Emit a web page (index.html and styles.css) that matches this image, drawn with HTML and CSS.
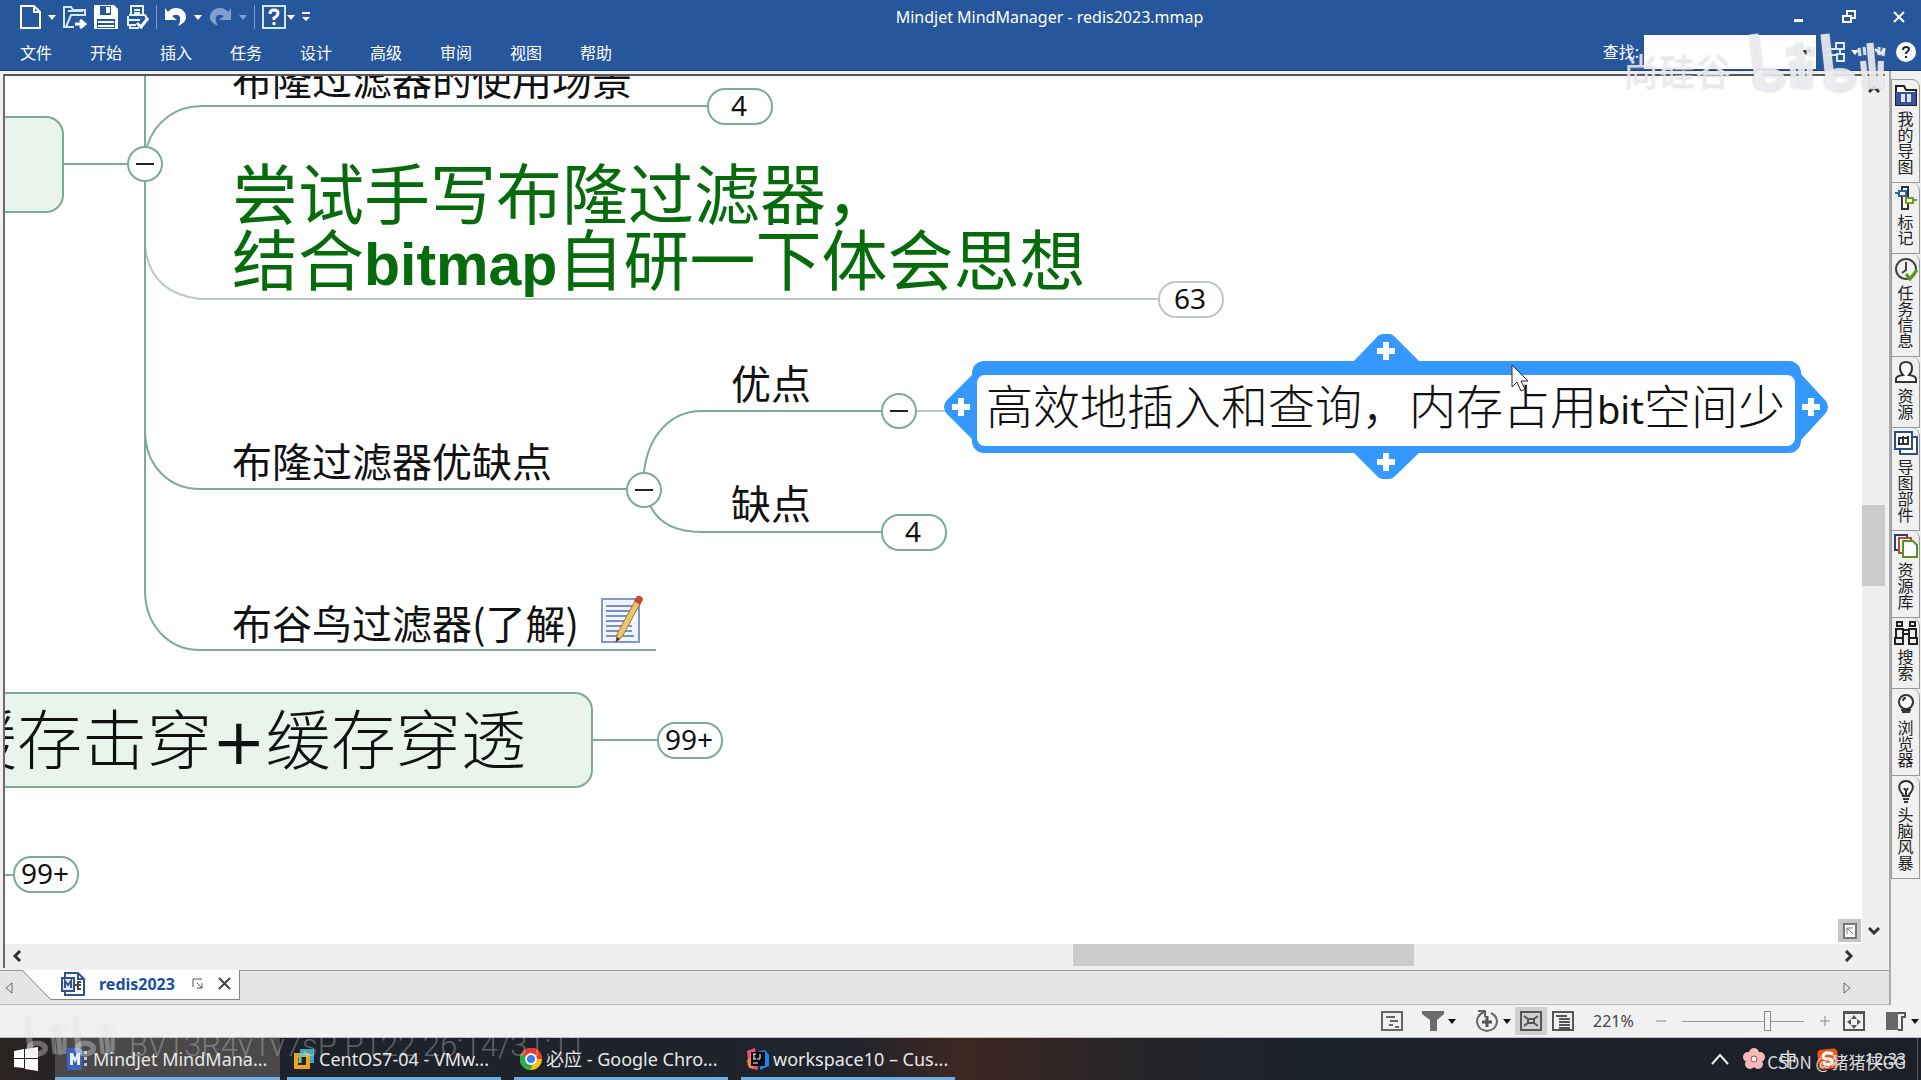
FILE: index.html
```html
<!DOCTYPE html>
<html lang="zh-CN">
<head>
<meta charset="utf-8">
<title>Mindjet MindManager - redis2023.mmap</title>
<link rel="stylesheet" href="styles.css">
</head>
<body>
<svg class="defs" aria-hidden="true">
  <symbol id="plus" viewBox="0 0 20 20"><path d="M7 1h6v6h6v6h-6v6H7v-6H1V7h6z" fill="#fff"/></symbol>
  <symbol id="caret" viewBox="0 0 8 6"><path d="M0 1h8L4 6z" fill="currentColor"/></symbol>
  <symbol id="bili" viewBox="0 0 140 62">
    <g id="half" fill="none" stroke="currentColor">
      <path d="M5 2l6 55" stroke-width="9"/><ellipse cx="20" cy="48" rx="12" ry="8" stroke-width="8"/>
      <path d="M43 29l3 27M61 29l-1 27" stroke-width="6"/><path d="M50 11l4 46" stroke-width="7"/>
      <path d="M39 16l1 8M44 15l1 8M59 15v8M64 16l-1 8" stroke-width="3"/>
    </g>
    <use href="#half" x="71"/>
  </symbol>
</svg>

<header class="ribbon">
  <div class="titlebar">
    <div class="quick">
      <button class="q new" aria-label="新建"><svg width="21" height="24" viewBox="0 0 21 24"><path d="M1 1h13l6 6v16H1zM14 1v6h6" fill="none" stroke="#fff" stroke-width="2"/></svg></button>
      <button class="q" aria-label="新建选项"><svg width="8" height="6"><use href="#caret"/></svg></button>
      <button class="q open" aria-label="打开"><svg width="24" height="24" viewBox="0 0 24 24" fill="none" stroke="#cfe9f5" stroke-width="2"><path d="M3 22H1V2h7l2 3h12v5M3 22L8 10h15M3 22h8M5 6h15"/><path d="M12 19h9M17 15l5 4-5 4" stroke="#fff" stroke-width="3"/></svg></button>
      <button class="q" aria-label="保存"><svg width="24" height="24" viewBox="0 0 24 24"><path d="M0 0h20l4 4v20H0z" fill="#fff"/><path d="M6 1h11v9H6zM3 14h18v9H3z" fill="#26569c"/><path d="M12 2h4v6h-4zM4 16h16v2H4zM4 20h16v2H4z" fill="#fff"/></svg></button>
      <button class="q" aria-label="打印"><svg width="24" height="24" viewBox="0 0 24 24" fill="none" stroke="#e6f4fa" stroke-width="2"><path d="M6 10V1h12v9M9 5h6M9 8h6M4 10h16l2 4M3 11v9h8M2 15h13M5 19v4h9"/><path d="M12 18l4 4 7-9" stroke="#fff" stroke-width="3"/></svg></button>
      <i class="sep"></i>
      <button class="q" aria-label="撤销"><svg width="23" height="20" viewBox="0 0 23 20"><path d="M1 1v12h12L8 9q6-3 8 1 1 4-2 9 9-4 8-10-2-8-10-8-5 0-8 4z" fill="#fff"/></svg></button>
      <button class="q" aria-label="撤销选项"><svg width="8" height="6"><use href="#caret"/></svg></button>
      <button class="q dim" aria-label="重做"><svg width="23" height="20" viewBox="0 0 23 20"><path d="M22 1v12H10l5-4q-6-3-8 1-1 4 2 9Q0 15 1 9q2-8 10-8 5 0 8 4z" fill="#7f9fd0"/></svg></button>
      <button class="q dim" aria-label="重做选项"><svg width="8" height="6"><use href="#caret"/></svg></button>
      <i class="sep"></i>
      <button class="q" aria-label="帮助"><svg width="24" height="24" viewBox="0 0 24 24" fill="none" stroke="#fff"><path d="M1 1h22v22H1z" stroke="#cfe9f5" stroke-width="2"/><path d="M8 9q0-4 4-4t4 3-4 5v2M12 17v3" stroke-width="3"/></svg></button>
      <button class="q tight" aria-label="帮助选项"><svg width="8" height="6"><use href="#caret"/></svg></button>
      <button class="q" aria-label="自定义"><svg width="8" height="10" viewBox="0 0 8 10"><path d="M0 0h8v2H0zM0 5h8l-4 4z" fill="#fff"/></svg></button>
    </div>
    <h1 class="apptitle">Mindjet MindManager - redis2023.mmap</h1>
    <div class="wincontrols">
      <button aria-label="最小化"><svg width="14" height="14" viewBox="0 0 14 14"><path d="M2 9h9v3H2z" fill="#fff"/></svg></button>
      <button aria-label="还原"><svg width="14" height="14" viewBox="0 0 14 14" fill="none" stroke="#fff" stroke-width="2"><path d="M5 5V1h8v7H9M1 6h8v6H1z"/></svg></button>
      <button aria-label="关闭"><svg width="14" height="14" viewBox="0 0 14 14"><path d="M2 2l10 10M12 2L2 12" stroke="#fff" stroke-width="2"/></svg></button>
    </div>
  </div>
  <div class="menubar">
    <nav class="menus">
      <a href="#">文件</a><a href="#">开始</a><a href="#">插入</a><a href="#">任务</a><a href="#">设计</a><a href="#">高级</a><a href="#">审阅</a><a href="#">视图</a><a href="#">帮助</a>
    </nav>
    <div class="find">
      <label for="find">查找:</label>
      <div class="findbox"><input id="find" type="text"><svg width="8" height="6"><use href="#caret"/></svg></div>
      <button aria-label="布局"><svg width="22" height="22" viewBox="0 0 22 22" fill="none" stroke="#dfeaf6" stroke-width="2"><path d="M12 2h8v6h-8zM13 13h7v7h-7zM2 8h10M2 14h11M16 8v5"/></svg></button>
      <button aria-label="布局选项"><svg width="8" height="6"><use href="#caret"/></svg></button>
      <button class="fold" aria-label="折叠"><svg width="12" height="8" viewBox="0 0 12 8"><path d="M1 1l5 5 5-5" fill="none" stroke="#fff" stroke-width="2"/></svg></button>
      <button class="help" aria-label="帮助"><svg width="20" height="20" viewBox="0 0 20 20"><circle cx="10" cy="10" r="10" fill="#fff"/><path d="M7 8q0-3 3-3t3 2-3 4v1M10 14v2" fill="none" stroke="#223" stroke-width="2"/></svg></button>
    </div>
  </div>
</header>

<main class="workspace">
  <section class="document">
    <div class="viewport">
      <div class="map">
        <div class="board">
          <svg class="links" width="1860" height="900" viewBox="0 0 1860 900" fill="none" stroke="#7eab95" stroke-width="2">
            <path d="M145 245q4 48 55 54h958M915 411h60" stroke="#bccac3"/>
            <path d="M63 164h82M145 70v520c0 36 24 60 55 60h456M147 146c8-24 28-40 55-40h505M145 430c0 36 24 59 55 59h426M644 472c4-36 26-61 58-61h179M650 505c8 18 26 27 52 27h179M592 740h65M0 875h13"/>
          </svg>
          <div class="branch stub"></div>
          <div class="branch main"><span>缓存击穿<b>+</b>缓存穿透</span></div>

          <div class="topic t-scene">布隆过滤器的使用场景</div>
          <div class="topic t-code">尝试手写布隆过滤器，<br>结合<b>bitmap</b>自研一下体会思想</div>
          <div class="topic t-proscons">布隆过滤器优缺点</div>
          <div class="topic t-pros">优点</div>
          <div class="topic t-cons">缺点</div>
          <div class="topic t-cuckoo">布谷鸟过滤器(了解)</div>
          <svg class="note" width="44" height="50" viewBox="0 0 44 50">
            <path d="M2 4h37v43H2z" fill="#eef5fd" stroke="#8299c6" stroke-width="2"/>
            <path d="M6 11h28M6 16h28M6 21h26M6 26h25M6 31h26M6 36h26M6 41h28" stroke="#7890c4" stroke-width="2"/>
            <path d="M36 4l5 3-19 35-6 5 1-8z" fill="#efc56b" stroke="#9b7b3c"/><path d="M34 6l3-5q5-1 6 4l-3 5z" fill="#c4473c"/><path d="M16 47l1-5 3 2z" fill="#333"/>
          </svg>

          <button class="toggle g-root" aria-label="折叠"></button>
          <button class="toggle g-proscons" aria-label="折叠"></button>
          <button class="toggle g-pros" aria-label="折叠"></button>
          <button class="count c-scene">4</button>
          <button class="count c-code">63</button>
          <button class="count c-cons">4</button>
          <button class="count c-main">99+</button>
          <button class="count c-low">99+</button>

          <div class="selected">
            <svg class="frame" width="886" height="148" viewBox="0 0 886 148" fill="#3498fe">
              <rect x="29" y="28" width="829" height="92" rx="12"/>
              <path d="M410 29l25-26q2-2 5-2h6q3 0 5 2l26 26zM410 119l25 25q2 2 5 2h6q3 0 5-2l26-25zM31 40L4 67q-3 3-3 7t3 7l27 27zM857 40l25 27q3 3 3 7t-3 7l-25 27z"/>
              <rect x="34" y="42" width="818" height="71" rx="8" fill="#fff"/>
            </svg>
            <button class="add n" aria-label="在上方添加"><svg width="20" height="20"><use href="#plus"/></svg></button>
            <button class="add s" aria-label="在下方添加"><svg width="20" height="20"><use href="#plus"/></svg></button>
            <button class="add w" aria-label="在左侧添加"><svg width="20" height="20"><use href="#plus"/></svg></button>
            <button class="add e" aria-label="在右侧添加"><svg width="20" height="20"><use href="#plus"/></svg></button>
            <div class="label">高效地插入和查询，内存占用<span>bit</span>空间少</div>
          </div>
          <svg class="cursor" width="20" height="30" viewBox="0 0 20 30"><path d="M1 1v22l5-5 4 9 4-2-4-8h7z" fill="#fff" stroke="#223" stroke-width="1"/></svg>
        </div>
        <button class="fitbox" aria-label="导航"><svg width="14" height="16" viewBox="0 0 14 16" fill="none" stroke="#777"><path d="M1 1h12v14H1z" fill="#fff" stroke-width="2"/><path d="M4 11V5h6M4 5l6 6" stroke-width="1"/></svg></button>
      </div>
      <div class="vscroll">
        <svg width="12" height="8" viewBox="0 0 12 8"><path d="M1 7l5-5 5 5" fill="none" stroke="#333" stroke-width="3"/></svg>
        <div class="vtrack"><i></i></div>
        <svg width="12" height="8" viewBox="0 0 12 8"><path d="M1 1l5 5 5-5" fill="none" stroke="#333" stroke-width="3"/></svg>
      </div>
    </div>
    <div class="hscroll">
      <svg width="10" height="12" viewBox="0 0 10 12"><path d="M8 1L3 6l5 5" fill="none" stroke="#333" stroke-width="3"/></svg>
      <div class="htrack"><i></i></div>
      <svg width="10" height="12" viewBox="0 0 10 12"><path d="M2 1l5 5-5 5" fill="none" stroke="#333" stroke-width="3"/></svg>
    </div>
    <div class="doctabs">
      <svg class="prev" width="10" height="14" viewBox="0 0 10 14"><path d="M8 2v10L2 7z" fill="none" stroke="#666"/></svg>
      <div class="tab">
        <svg class="slant" width="29" height="30" viewBox="0 0 29 30"><path d="M0 0h29v29z" fill="#fff"/><path d="M0 0l28 29h1" fill="none" stroke="#888"/></svg>
        <div class="tabbody">
          <svg width="24" height="24" viewBox="0 0 24 24" fill="none" stroke="#33518f" stroke-width="2"><path d="M4 6V1h13l6 6v16H4v-4M17 1v6h6"/><path d="M1 6h12v13H1z" fill="#e4ebf8"/><path d="M4 16V9l3 4 3-4v7" fill="none"/><path d="M20 10h-3v7h3M14 13h6" stroke="#444"/></svg>
          <a href="#">redis2023</a>
          <svg class="pin" width="12" height="12" viewBox="0 0 12 12" fill="none" stroke="#555"><path d="M1 9V1h9M5 5l5 5M10 5v5H5" stroke-width="1"/></svg>
          <button aria-label="关闭标签"><svg width="13" height="13" viewBox="0 0 13 13"><path d="M1 1l11 11M12 1L1 12" stroke="#444" stroke-width="2"/></svg></button>
        </div>
      </div>
      <svg class="next" width="10" height="14" viewBox="0 0 10 14"><path d="M2 2v10l6-5z" fill="none" stroke="#666"/></svg>
    </div>
  </section>

  <aside class="sidetabs">
    <button><svg viewBox="0 0 24 24"><path d="M2 22V3h8l2 4h10v15z" fill="#fff" stroke="#222" stroke-width="2"/><path d="M2 9h20v13H2z" fill="#3c509c"/><path d="M7 11h4v8H7zM13 11h4v8h-4z" fill="#dce4f6"/></svg><span>我的导图</span></button>
    <button><svg viewBox="0 0 24 24" fill="#fff" stroke-width="2"><path d="M8 1h6v22H8z" stroke="#333"/><path d="M5 5h7v5H5zM1 7h4" stroke="#2c65ad"/><path d="M12 12h7v5h-7zM19 14h4" stroke="#6a9f22"/></svg><span>标记</span></button>
    <button><svg viewBox="0 0 24 24" fill="none" stroke-width="2"><circle cx="12" cy="12" r="10" stroke="#444"/><path d="M12 5v8l-4 3" stroke="#444"/><path d="M12 17l4 5 7-9" stroke="#58991c" stroke-width="3"/></svg><span>任务信息</span></button>
    <button><svg viewBox="0 0 24 24" fill="#fff" stroke="#333" stroke-width="2"><path d="M2 22v-3q0-3 7-4-3-3-3-7 0-6 6-6t6 6q0 4-3 7 7 1 7 4v3z"/></svg><span>资源</span></button>
    <button><svg viewBox="0 0 24 24" fill="#fff" stroke="#2e4e86" stroke-width="2"><path d="M6 6h17v17H6z"/><path d="M1 1h17v17H1z"/><path d="M5 6v8M9 5v9M14 5v9M5 7h9M5 13h9" stroke="#333"/></svg><span>导图部件</span></button>
    <button><svg viewBox="0 0 24 24" fill="#fff" stroke-width="2"><path d="M1 1h12v15H1z" stroke="#283f7c"/><path d="M5 4h12v15H5z" stroke="#c1492c"/><path d="M9 7h10l4 4v12H9z" stroke="#5b8f24"/></svg><span>资源库</span></button>
    <button><svg viewBox="0 0 24 24" fill="none" stroke="#222" stroke-width="2"><path d="M3 1h5v4H3zM16 1h5v4h-5zM2 8h7v9H2zM15 8h7v9h-7zM1 17h8v6H1zM15 17h8v6h-8zM9 9h6M9 13h6"/></svg><span>搜索</span></button>
    <button><svg viewBox="0 0 24 24" fill="#fff" stroke="#333" stroke-width="2"><circle cx="12" cy="10" r="7"/><path d="M9 9q0-3 3-3M7 18h10M8 20h8" fill="none"/></svg><span>浏览器</span></button>
    <button><svg viewBox="0 0 24 24" fill="#fff" stroke="#333" stroke-width="2"><path d="M9 17q0-2-2-4-3-4-1-8 2-3 6-3t6 3q2 4-1 8-2 2-2 4z"/><path d="M9 20h6M10 23h4M10 9l2 3 2-3M12 12v5" fill="none"/></svg><span>头脑风暴</span></button>
  </aside>
</main>

<footer class="status">
  <button aria-label="备注"><svg width="22" height="20" viewBox="0 0 22 20" fill="none" stroke="#666" stroke-width="2"><path d="M1 1h20v18H1zM5 6h9M9 10h8M8 14h4M14 16h4"/></svg></button>
  <button class="s-filter" aria-label="筛选"><svg width="22" height="20" viewBox="0 0 22 20"><path d="M0 0h22v3l-7 6v11H8V9L0 3z" fill="#6b6b6b"/></svg><svg width="8" height="6"><use href="#caret"/></svg></button>
  <button class="s-detail" aria-label="详细"><svg width="24" height="22" viewBox="0 0 24 22" fill="none" stroke="#666" stroke-width="2"><path d="M9 2Q2 5 2 12q1 8 10 9 9-1 10-9 0-6-6-9M3 1h7v6"/><path d="M12 6v11M7 12h10" stroke-width="3" stroke="#555"/></svg><svg width="8" height="6"><use href="#caret"/></svg></button>
  <button class="s-view on" aria-label="导图视图"><svg width="22" height="20" viewBox="0 0 22 20" fill="none" stroke="#555" stroke-width="2"><path d="M1 1h20v18H1zM4 5l4 3h6l4-3M4 15l4-3h6l4 3M8 8v4h6V8"/></svg></button>
  <button class="s-view" aria-label="大纲视图"><svg width="22" height="20" viewBox="0 0 22 20" fill="none" stroke="#555" stroke-width="2"><path d="M1 1h20v18H1zM4 5h11M7 8h11M7 11h11M7 14h11M7 17h11"/></svg></button>
  <output>221%</output>
  <button class="s-minus" aria-label="缩小"><svg width="10" height="10" viewBox="0 0 10 10"><path d="M0 5h10" stroke="#888" stroke-width="1"/></svg></button>
  <input type="range" min="0" max="100" value="71" aria-label="缩放">
  <button class="s-plus" aria-label="放大"><svg width="10" height="10" viewBox="0 0 10 10"><path d="M0 5h10M5 0v10" stroke="#888" stroke-width="1"/></svg></button>
  <button class="s-fit" aria-label="适合窗口"><svg width="22" height="20" viewBox="0 0 22 20" fill="none" stroke="#555" stroke-width="2"><path d="M1 1h20v18H1zM1 2h20"/><path d="M11 4l3 4H8zM11 18l3-4H8zM4 11l4-3v6zM18 11l-4-3v6z" fill="#555" stroke="none"/></svg></button>
  <button class="s-panel" aria-label="任务窗格"><svg width="22" height="20" viewBox="0 0 22 20"><path d="M1 1h12v18H1z" fill="#666"/><path d="M13 2h7v4h-3v13h-4" fill="none" stroke="#555" stroke-width="2"/></svg><svg width="8" height="6"><use href="#caret"/></svg></button>
</footer>

<footer class="taskbar">
  <button class="start" aria-label="开始"><svg width="24" height="24" viewBox="0 0 24 24"><path d="M0 4l10-2v9H0zM11 2l13-2v11H11zM0 12h10v9L0 20zM11 12h13v12l-13-2z" fill="#fff"/></svg></button>
  <div class="apps">
    <button class="active"><svg width="22" height="22" viewBox="0 0 22 22"><path d="M0 0h15v22H0z" fill="#3a63c0"/><path d="M3 5h3l2 5 2-5h3v12h-3v-6l-2 4-2-4v6H3z" fill="#e7eefc"/><path d="M17 3h3v3h-3zM17 9h3v3h-3zM17 15h3v3h-3z" fill="#b9c9ee"/></svg><span>Mindjet MindMana...</span></button>
    <button><svg width="22" height="22" viewBox="0 0 22 22" fill="none" stroke-width="4"><path d="M7 3h12v12" stroke="#3ba7c9"/><path d="M3 7v12h12V7z" stroke="#f0a41c"/><path d="M7 15V7h8" stroke="#7cc1a5" stroke-width="3"/></svg><span>CentOS7-04 - VMw...</span></button>
    <button><svg width="22" height="22" viewBox="0 0 22 22"><circle cx="11" cy="11" r="11" fill="#fbc117"/><path d="M11 11H22A11 11 0 0 0 1 6z" fill="#e33b2e"/><path d="M11 11L1 6a11 11 0 0 0 9 16l5-9z" fill="#2da94f"/><path d="M11 0A11 11 0 0 1 21 6H11z" fill="#e33b2e"/><circle cx="11" cy="11" r="6" fill="#fff"/><circle cx="11" cy="11" r="4" fill="#3b7de9"/></svg><span>必应 - Google Chro...</span></button>
    <button><svg width="22" height="22" viewBox="0 0 22 22"><path d="M0 3l8-3 3 22-9-2z" fill="#f0527d"/><path d="M0 12l6-4v13l-5-3z" fill="#fa8c35"/><path d="M12 3l6-1 4 5v11l-9 4z" fill="#1b86e8"/><path d="M4 4h14v14H4z" fill="#0a0a14"/><path d="M6 6h3M7 6v5M6 11h3M13 6v5h-3M6 15h5" fill="none" stroke="#fff"/></svg><span>workspace10 – Cus...</span></button>
  </div>
  <div class="tray">
    <svg width="18" height="12" viewBox="0 0 18 12"><path d="M1 11l8-9 8 9" fill="none" stroke="#eee" stroke-width="2"/></svg>
    <svg class="flower" width="22" height="22" viewBox="0 0 22 22" fill="#f5b9b9"><circle cx="11" cy="5" r="5"/><circle cx="5" cy="9" r="5"/><circle cx="17" cy="9" r="5"/><circle cx="7" cy="16" r="5"/><circle cx="15" cy="16" r="5"/><circle cx="11" cy="11" r="3" fill="#fff" stroke="#c43d3d"/></svg>
    <span class="ime">中</span>
    <svg class="sogou" width="22" height="22" viewBox="0 0 22 22"><rect x="1" y="1" width="20" height="20" rx="4" fill="#e8591c" transform="rotate(-6 11 11)"/><path d="M16 6Q8 3 6 8q0 3 5 3t4 4q-3 3-9 0" fill="none" stroke="#fff" stroke-width="3"/></svg>
    <time>12:33</time>
  </div>
</footer>

<div class="mark mark-top"><span>尚硅谷</span><svg width="140" height="62"><use href="#bili"/></svg></div>
<div class="mark mark-bottom"><svg width="96" height="42"><use href="#bili"/></svg><span>BV13R4y1v7sP P122 26:14/31:11</span></div>
<div class="mark mark-csdn">CSDN @猪猪侠GG</div>
</body>
</html>
```
FILE: styles.css
```css
* { box-sizing: border-box; }
body {
  margin: 0;
  height: 100vh;
  display: flex;
  flex-direction: column;
  position: relative;
  overflow: hidden;
  background: #f0f0f0;
  font: 16px/20px "Noto Sans", "Noto Sans CJK SC", sans-serif;
  color: #111;
}
svg { display: block; flex: none; }
.defs { position: absolute; width: 0; height: 0; }
button {
  border: 0;
  padding: 0;
  background: none;
  font: inherit;
  color: inherit;
  display: flex;
  align-items: center;
}
a { color: inherit; text-decoration: none; }

/* Ribbon */
.ribbon { flex: none; background: #26569c; color: #fff; border-bottom: 1px solid #1c437f; }
.titlebar { display: grid; grid-template-columns: 1fr auto 1fr; height: 34px; align-items: center; }
.quick { display: flex; align-items: center; gap: 7px; padding-left: 20px; }
.quick .tight { margin-left: -6px; }
.dim { color: #7f9fd0; }
.sep { width: 1px; height: 24px; background: #7c9bc9; }
.apptitle { margin: 0; padding-left: 178px; font-size: 16px; line-height: 20px; font-weight: 400; }
.wincontrols { display: flex; justify-content: flex-end; gap: 36px; padding-right: 15px; }
.menubar { display: flex; justify-content: space-between; height: 36px; }
.menus { display: flex; gap: 39px; padding: 9px 0 0 20px; }
.menus a { width: 32px; }
.menus { gap: 38px; }
.find { display: flex; align-items: center; padding-right: 5px; }
.findbox { display: flex; align-items: center; width: 172px; height: 34px; margin: 0 8px 0 5px; padding-right: 6px; background: #fff; color: #333; }
.findbox input { flex: 1; min-width: 0; height: 30px; border: 0; outline: 0; }
.find button { margin-right: 5px; }
.find .fold { margin: 0 5px 0 10px; }
.find .help { margin: 0 0 0 5px; }

/* Document */
.workspace { flex: 1; min-height: 0; display: flex; }
.document { flex: 1; min-width: 0; display: flex; flex-direction: column; border-right: 2px solid #aaa; }
.viewport { flex: 1; min-height: 0; display: flex; margin: 3px 4px 0 3px; border-top: 2px solid #5b5659; border-left: 2px solid #6c6a6c; }
.map { flex: 1; min-width: 0; position: relative; overflow: hidden; background: #fff; }
.board { position: absolute; left: -5px; top: -76px; }
.links, .note, .cursor, .topic, .branch, .toggle, .count, .selected { position: absolute; }
.links { left: 0; top: 0; }
.branch { background: #e9f4ed; border: 2px solid #7eab95; border-radius: 18px; white-space: nowrap; }
.stub { left: -60px; top: 116px; width: 124px; height: 97px; }
.main { left: -64px; top: 692px; width: 657px; height: 96px; padding-left: 14px; font: 300 65px/84px "Noto Sans CJK SC", sans-serif; }
.main b { font: 400 64px/64px "DejaVu Sans", sans-serif; }
.topic { left: 232px; white-space: nowrap; font: 400 40px/48px "Noto Sans CJK SC", sans-serif; }
.t-scene { top: 54px; }
.t-code { top: 157px; font-size: 66px; line-height: 66px; color: #056b0b; }
.t-code b { font: 700 59px/60px "Liberation Sans", sans-serif; }
.t-proscons { top: 436px; }
.t-pros { left: 731px; top: 358px; }
.t-cons { left: 731px; top: 478px; }
.t-cuckoo { top: 598px; }
.note { left: 600px; top: 595px; }
.toggle { width: 36px; height: 36px; border: 2px solid #7eab95; border-radius: 50%; background: #fff; justify-content: center; }
.toggle::before { content: ""; width: 18px; height: 2px; background: #222; }
.g-root { left: 127px; top: 146px; }
.g-proscons { left: 626px; top: 472px; }
.g-pros { left: 881px; top: 393px; }
.count { width: 66px; height: 37px; padding: 0 2px 4px 0; border: 2px solid #7eab95; border-radius: 18px; background: #fff; justify-content: center; font-size: 28px; line-height: 32px; }
.c-scene { left: 707px; top: 88px; }
.c-code { left: 1158px; top: 281px; border-color: #bccac3; }
.c-cons { left: 881px; top: 514px; }
.c-main { left: 657px; top: 722px; }
.c-low { left: 13px; top: 856px; }
.selected { left: 943px; top: 333px; width: 886px; height: 148px; }
.frame, .add, .label { position: absolute; }
.frame { left: 0; top: 0; }
.add.n { left: 433px; top: 8px; }
.add.s { left: 433px; top: 119px; }
.add.w { left: 8px; top: 64px; }
.add.e { left: 858px; top: 64px; }
.label { left: 43px; top: 41px; white-space: nowrap; font: 300 47px/60px "Noto Sans CJK SC", sans-serif; }
.label span { font: 400 38px/40px "Noto Sans", sans-serif; }
.cursor { left: 1511px; top: 364px; }
.fitbox { position: absolute; right: 1px; bottom: 2px; width: 23px; height: 23px; background: #c6c6c6; justify-content: center; }
.vscroll { width: 23px; display: flex; flex-direction: column; align-items: center; gap: 8px; padding: 9px 0; background: #efefef; }
.vtrack { flex: 1; align-self: stretch; display: flex; flex-direction: column; }
.vtrack::before { content: ""; flex: 408; }
.vtrack::after { content: ""; flex: 336; }
.vtrack i { flex: 82; background: #cbcbcb; }
.hscroll { flex: none; display: flex; align-items: center; height: 24px; margin: 0 4px 2px 3px; padding: 0 31px 0 7px; border-left: 2px solid #6c6a6c; background: #efefef; }
.htrack { flex: 1; height: 22px; align-self: flex-start; display: flex; }
.htrack::before { content: ""; flex: 1050; }
.htrack::after { content: ""; flex: 430; }
.htrack i { flex: 341; background: #cbcbcb; }
.doctabs { flex: none; display: flex; align-items: flex-start; height: 35px; border-top: 1px solid #999; border-bottom: 1px solid #bbb; background: #e5e5e5; }
.prev { margin: 10px 8px 0 4px; }
.next { margin: 10px 37px 0 auto; }
.tab { display: flex; margin-top: -1px; }
.tabbody { display: flex; align-items: center; height: 30px; padding: 0 8px 2px 10px; background: #fff; border-right: 1px solid #888; border-bottom: 1px solid #888; }
.tabbody a { margin: 0 17px 0 14px; font-size: 16px; font-weight: 700; color: #16509e; }
.pin { margin-right: 14px; }

/* Panel tabs */
.sidetabs { flex: none; width: 30px; padding-top: 8px; background: #f0f0f0; }
.sidetabs button { width: 29px; flex-direction: column; gap: 4px; padding: 3px 0 7px; border: 1px solid #999; border-top: 0; border-top-right-radius: 8px; }
.sidetabs button:first-child { border-top: 1px solid #999; }
.sidetabs svg { width: 24px; height: 24px; }
.sidetabs span { writing-mode: vertical-rl; text-orientation: upright; font: 16px/20px "Noto Sans CJK SC", sans-serif; color: #222; }

/* Status bar */
.status { flex: none; display: flex; align-items: center; justify-content: flex-end; height: 33px; padding-right: 2px; background: #f1f1f1; border-bottom: 1px solid #bbb; }
.status button { gap: 4px; }
.s-filter { margin-left: 19px; }
.s-detail { margin: 0 4px 0 19px; }
.status .s-view { height: 28px; padding: 0 5px; }
.status .on { background: #cfcfcf; }
.status output { width: 44px; margin: 0 19px 0 14px; font-size: 16px; color: #444; }
.status input { appearance: none; width: 122px; height: 20px; margin: 0 16px; background: linear-gradient(#999, #999) center / 100% 1px no-repeat; }
.status input::-webkit-slider-thumb { appearance: none; width: 7px; height: 20px; border: 1px solid #888; background: #f4f4f4; }
.s-fit { margin: 0 20px 0 13px; }

/* Taskbar */
.taskbar { flex: none; display: flex; height: 42px; color: #e8e8e8; background: linear-gradient(90deg, #2a2322 0, #1e222a 15%, #1f232b 44%, #3e2721 50%, #232428 60%, #1d232c 68%, #1c1f27 100%); }
.start { width: 55px; padding-left: 14px; }
.apps { flex: 1; display: flex; gap: 13px; }
.apps button { width: 214px; gap: 4px; padding: 3px 0 0 6px; border-bottom: 3px solid #6caee6; font-size: 18px; white-space: nowrap; }
.apps .active { width: 225px; margin-right: -6px; padding-left: 12px; background: #4a4849; }
.tray { display: flex; align-items: center; padding-right: 11px; margin-right: 3px; border-right: 1px solid #555; }
.flower { margin: 0 14px; }
.ime { margin-right: 20px; font-size: 18px; }
.sogou { margin-right: 26px; }

/* Overlaid credits */
.mark { position: absolute; display: flex; align-items: center; white-space: nowrap; pointer-events: none; }
.mark-top { right: 32px; top: 32px; gap: 18px; color: #eeeff2dd; font: 36px/40px "Noto Sans CJK SC", sans-serif; }
.mark-top span { padding-top: 12px; text-shadow: 0 1px 2px #9996; }
.mark-bottom { left: 23px; bottom: 18px; gap: 10px; color: #ffffff48; font: 300 31px/32px Roboto, sans-serif; }
.mark-bottom span { padding-top: 18px; }
.mark-bottom svg { filter: drop-shadow(0 0 1px #8888); }
.mark-top svg { filter: drop-shadow(0 0 1px #9998); }
.mark-csdn { right: 15px; bottom: 8px; color: #d8d8d8; font: 17px/20px "Noto Sans CJK SC", sans-serif; }
```
